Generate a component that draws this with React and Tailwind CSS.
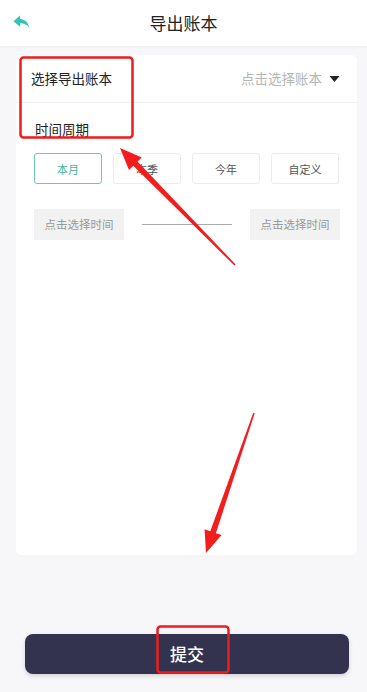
import { useState } from 'react';

function BackIcon() {
  return (
    <svg width="18" height="14" viewBox="0 0 18 14" fill="#2ec7b3">
      <path d="M7 0.5L0.5 6.2L7 11.8V8.3C11 8.3 13.8 9.6 16.2 12.6C15.4 8.2 12.6 4.6 7 4V0.5Z" />
    </svg>
  );
}

function Annotations() {
  return (
    <svg className="pointer-events-none absolute inset-0" width="367" height="692" viewBox="0 0 367 692">
      <rect x="20.5" y="57.5" width="112" height="80" rx="3" fill="none" stroke="#ee1c1c" strokeWidth="2.5" />
      <rect x="157.5" y="626.5" width="71" height="46" rx="3" fill="none" stroke="#ee1c1c" strokeWidth="2.5" />
      <polygon
        points="235.6,264.4 137.5,161.6 141.8,157.4 120,148 129,170 133.3,165.8 234.4,265.6"
        fill="#f41d1d"
      />
      <polygon
        points="254.7,413.2 215.9,533.2 221.6,535.1 206,553 204.6,529.3 210.3,531.2 253.3,412.8"
        fill="#f41d1d"
      />
    </svg>
  );
}

export default function App() {
  const [period, setPeriod] = useState('本月');
  const periods = ['本月', '本季', '今年', '自定义'];

  return (
    <div
      className="relative flex h-[692px] w-[367px] flex-col overflow-hidden bg-[#f7f7f9]"
      style={{ fontFamily: '"Noto Sans CJK SC", "Noto Sans", sans-serif' }}
    >
      {/* Header */}
      <header className="relative flex h-[46px] shrink-0 items-center justify-center bg-white shadow-[0_1px_3px_rgba(0,0,0,0.04)]">
        <button className="absolute left-[13px] top-[15px]">
          <BackIcon />
        </button>
        <h1 className="text-[17px] text-[#222]">导出账本</h1>
      </header>

      {/* Card */}
      <main className="pl-4 pr-[10px] pt-[9px]">
        <div className="h-[500px] rounded-md bg-white">
          <div className="flex h-[48px] items-center justify-between border-b border-[#f0f0f0] pl-[15px] pr-[17px]">
            <span className="text-[13.5px] text-[#222]">选择导出账本</span>
            <span className="flex items-center gap-[7px] text-[13.5px] text-[#b5b5b5]">
              点击选择账本
              <svg width="11" height="8" viewBox="0 0 11 8">
                <polygon points="0.5,1 10.5,1 5.5,7" fill="#222" />
              </svg>
            </span>
          </div>

          <div className="pl-[19px] pt-[16px] text-[13.5px] text-[#222]">时间周期</div>

          <div className="mt-[14px] flex gap-[11px] pl-[18px]">
            {periods.map((p) => (
              <button
                key={p}
                onClick={() => setPeriod(p)}
                className={`flex h-[31px] w-[68px] items-center justify-center rounded-[3px] border text-[11px] ${
                  period === p
                    ? 'border-[#6cc9b8] text-[#3fb39c]'
                    : 'border-[#ececec] text-[#555]'
                }`}
              >
                {p}
              </button>
            ))}
          </div>

          <div className="mt-[25px] flex items-center pl-[18px]">
            <div className="flex h-[31px] w-[90px] items-center justify-center bg-[#f2f2f2] text-[11.5px] text-[#999]">
              点击选择时间
            </div>
            <div className="mx-[18px] h-px w-[90px] bg-[#aaa]" />
            <div className="flex h-[31px] w-[90px] items-center justify-center bg-[#f2f2f2] text-[11.5px] text-[#999]">
              点击选择时间
            </div>
          </div>
        </div>
      </main>

      {/* Submit */}
      <div className="mt-auto pb-[18px] pl-[25px] pr-[18px]">
        <button className="flex h-[40px] w-full items-center justify-center rounded-lg bg-[#333350] text-[17px] font-medium text-white shadow-[0_2px_4px_rgba(0,0,0,0.15)]">
          提交
        </button>
      </div>

      <Annotations />
    </div>
  );
}
